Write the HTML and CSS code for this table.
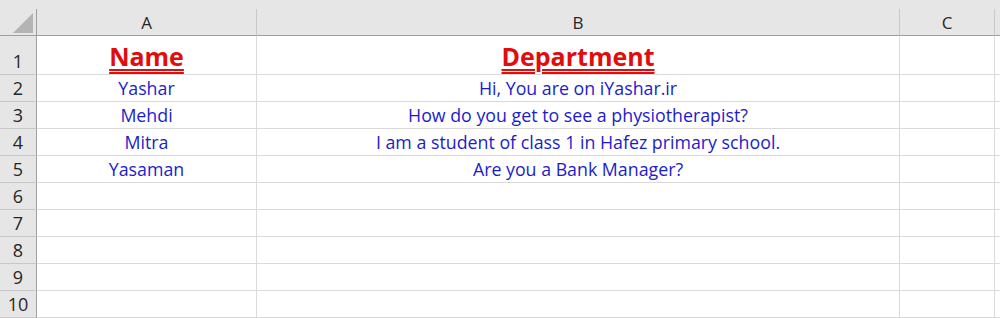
FILE: index.html
```html
<!DOCTYPE html>
<html>
<head>
<meta charset="utf-8">
<link rel="stylesheet" href="styles.css">
</head>
<body>
<div class="top-strip"></div>
<div class="sheet">
  <div class="corner"><span class="tri"></span></div>
  <div class="colhead">A</div>
  <div class="colhead">B</div>
  <div class="colhead">C</div>
  <div class="colhead last"></div>

  <div class="rowhead tall">1</div>
  <div class="cell tall"><span class="title">Name</span></div>
  <div class="cell tall"><span class="title">Department</span></div>
  <div class="cell tall"></div>
  <div class="cell tall last"></div>

  <div class="rowhead">2</div>
  <div class="cell val">Yashar</div>
  <div class="cell val">Hi, You are on iYashar.ir</div>
  <div class="cell"></div>
  <div class="cell last"></div>

  <div class="rowhead">3</div>
  <div class="cell val">Mehdi</div>
  <div class="cell val">How do you get to see a physiotherapist?</div>
  <div class="cell"></div>
  <div class="cell last"></div>

  <div class="rowhead">4</div>
  <div class="cell val">Mitra</div>
  <div class="cell val">I am a student of class 1 in Hafez primary school.</div>
  <div class="cell"></div>
  <div class="cell last"></div>

  <div class="rowhead">5</div>
  <div class="cell val">Yasaman</div>
  <div class="cell val">Are you a Bank Manager?</div>
  <div class="cell"></div>
  <div class="cell last"></div>

  <div class="rowhead">6</div>
  <div class="cell"></div><div class="cell"></div><div class="cell"></div><div class="cell last"></div>
  <div class="rowhead">7</div>
  <div class="cell"></div><div class="cell"></div><div class="cell"></div><div class="cell last"></div>
  <div class="rowhead">8</div>
  <div class="cell"></div><div class="cell"></div><div class="cell"></div><div class="cell last"></div>
  <div class="rowhead">9</div>
  <div class="cell"></div><div class="cell"></div><div class="cell"></div><div class="cell last"></div>
  <div class="rowhead">10</div>
  <div class="cell"></div><div class="cell"></div><div class="cell"></div><div class="cell last"></div>
</div>
</body>
</html>
```

FILE: styles.css
```css
html, body {
  margin: 0;
  padding: 0;
  background: #ffffff;
  overflow: hidden;
}
body {
  width: 1000px;
  height: 318px;
  font-family: "Open Sans", "Liberation Sans", sans-serif;
}
.top-strip {
  height: 9px;
  background: #e6e6e6;
}
.sheet {
  display: grid;
  grid-template-columns: 37px 220px 643px 95px 1fr;
  grid-template-rows: 27px 39px repeat(9, 27px);
}
.corner {
  position: relative;
  background: #e6e6e6;
  border-right: 1px solid #9f9f9f;
  border-bottom: 1px solid #9f9f9f;
  box-sizing: border-box;
}
.tri {
  position: absolute;
  right: 3px;
  bottom: 2px;
  width: 0;
  height: 0;
  border-left: 20px solid transparent;
  border-bottom: 20px solid #b4b4b4;
}
.colhead {
  background: #e6e6e6;
  border-right: 1px solid #c8c8c8;
  border-bottom: 1px solid #9f9f9f;
  box-sizing: border-box;
  display: flex;
  align-items: center;
  justify-content: center;
  font-size: 17px;
  color: #262626;
  padding-top: 1px;
}
.colhead.last {
  border-right: none;
}
.rowhead {
  background: #e6e6e6;
  border-right: 1px solid #9f9f9f;
  border-bottom: 1px solid #c8c8c8;
  box-sizing: border-box;
  display: flex;
  align-items: flex-end;
  justify-content: center;
  font-size: 18px;
  color: #262626;
  padding-bottom: 1px;
}
.cell {
  border-right: 1px solid #dadada;
  border-bottom: 1px solid #dadada;
  box-sizing: border-box;
  display: flex;
  align-items: flex-end;
  justify-content: center;
  padding-bottom: 1px;
  white-space: nowrap;
}
.cell.last {
  border-right: none;
}
.val {
  font-size: 17.8px;
  color: #1c1ccc;
}
.title {
  font-size: 25px;
  font-weight: bold;
  color: #e10d0d;
  text-decoration: underline double;
  text-decoration-thickness: 2px;
  text-underline-offset: 3px;
  line-height: 1;
  padding-bottom: 4px;
}
```
